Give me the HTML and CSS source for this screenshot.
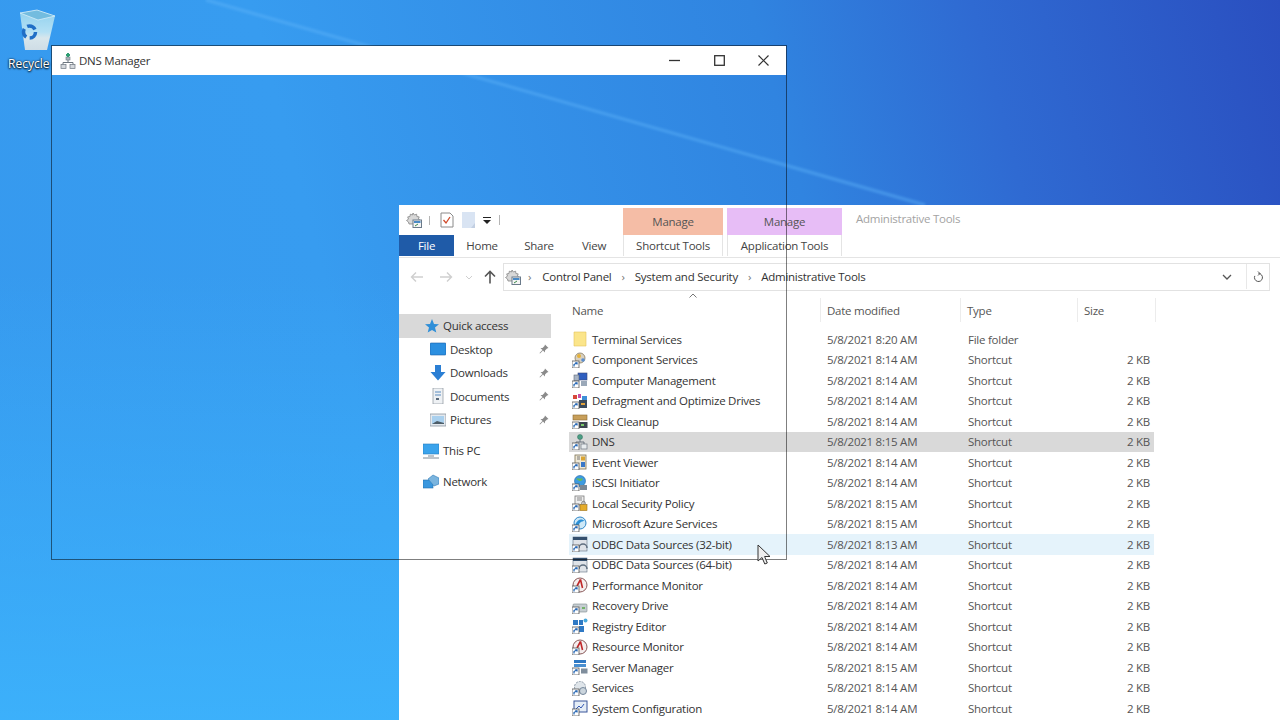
FILE: index.html
```html
<!DOCTYPE html>
<html lang="en">
<head>
<meta charset="utf-8">
<title>DNS Manager</title>
<link rel="stylesheet" href="styles.css">
</head>
<body>
<svg width="0" height="0" class="defs">
  <defs>
    <linearGradient id="binBody" x1="0" y1="0" x2="0" y2="1"><stop offset="0" stop-color="#8fd0ee"/><stop offset=".55" stop-color="#b4e0f4"/><stop offset=".7" stop-color="#d8e6ec"/><stop offset="1" stop-color="#cfdde6"/></linearGradient>
    <symbol id="arrow" viewBox="0 0 16 16"><rect x="0" y="9" width="7" height="7" fill="#fff" stroke="#555" stroke-width=".8"/><path d="M2 14.500V12.500L4.500 11M3.200 10.800H5V12.400" fill="none" stroke="#1b5fb0" stroke-width="1.200"/></symbol>
    <symbol id="tools" viewBox="0 0 16 16"><path d="M7 1l1.400 2 2.200-.8.300 2.300 2.300.4-.8 2.200 2 1.300-2 1.400.8 2.200H3l-.5-2-2-1.500 2-1.400-.8-2.200 2.300-.4.300-2.300 2.200.8z" fill="#d8d8d8" stroke="#858585" stroke-width=".8"/><rect x="7" y="8" width="8.500" height="7.500" fill="#f4f4f4" stroke="#6a7a8a"/><rect x="8" y="9" width="6.500" height="2" fill="#4a8ac6"/><path d="M9 14l3-2" stroke="#3b8a4a"/></symbol>
    <symbol id="dnsicon" viewBox="0 0 16 16"><rect x="6" y="4" width="4" height="3" fill="#aeb6bd" stroke="#6d7780" stroke-width=".6"/><path d="M8 7v2M3 12V9.500h10V12" fill="none" stroke="#6d7780"/><rect x="1" y="11.500" width="5" height="4" fill="#d4d8dc" stroke="#6d7780" stroke-width=".7"/><rect x="10" y="11.500" width="5" height="4" fill="#d4d8dc" stroke="#6d7780" stroke-width=".7"/><path d="M8 0v4M6 2h4" stroke="#2f9e73" stroke-width="2"/></symbol>
    <symbol id="i-component" viewBox="0 0 16 16"><circle cx="8" cy="6" r="5" fill="#d8d0c0" stroke="#8a7c60" stroke-width=".8"/><circle cx="7" cy="4" r="2" fill="#e6b23a"/><circle cx="11" cy="8" r="1.800" fill="#5a8ed0"/><use href="#arrow"/></symbol>
    <symbol id="i-computer" viewBox="0 0 16 16"><rect x="6" y="1" width="9" height="7" fill="#2f5fc0" stroke="#3a4a78" stroke-width=".6"/><rect x="2" y="3" width="5" height="6" fill="#a8b4c4" stroke="#5c6878" stroke-width=".6"/><rect x="9" y="9" width="6" height="5" fill="#9aa8b8"/><use href="#arrow"/></symbol>
    <symbol id="i-defrag" viewBox="0 0 16 16"><rect x="1" y="2" width="4" height="4" fill="#d8483a"/><rect x="6" y="1" width="3" height="4" fill="#c84fa8"/><rect x="10" y="3" width="5" height="4" fill="#3e8ed8"/><rect x="7" y="7" width="8" height="8" fill="#3b4a5c"/><rect x="9" y="10" width="4" height="2" fill="#e2a23a"/><use href="#arrow"/></symbol>
    <symbol id="i-disk" viewBox="0 0 16 16"><rect x="1" y="2" width="14" height="5" fill="#c89f5a" stroke="#8a6c34" stroke-width=".6"/><rect x="7" y="9" width="8.500" height="6" fill="#3d4650"/><rect x="9" y="11" width="3" height="2" fill="#7bc96a"/><use href="#arrow"/></symbol>
    <symbol id="i-dns" viewBox="0 0 16 16"><circle cx="8" cy="3" r="2.500" fill="#4c9e84" stroke="#2e6c5a" stroke-width=".5"/><path d="M8 5v3M4 10V8h8v3" fill="none" stroke="#6a7480"/><rect x="9" y="10" width="6" height="5" fill="#e8ecef" stroke="#6d7780" stroke-width=".7"/><use href="#arrow"/></symbol>
    <symbol id="i-event" viewBox="0 0 16 16"><rect x="3" y="1" width="11" height="14" fill="#f0e9d6" stroke="#7b6f52" stroke-width=".8"/><rect x="9" y="2.500" width="4" height="4" fill="#d9a432"/><rect x="9" y="8" width="4" height="5" fill="#3a78c8"/><path d="M5 3h3M5 5h3" stroke="#777"/><use href="#arrow"/></symbol>
    <symbol id="i-iscsi" viewBox="0 0 16 16"><circle cx="8" cy="6" r="5.500" fill="#3d9be0" stroke="#2166a8" stroke-width=".6"/><path d="M4 4c2-2 4 1 6-1 2 3-3 4-4 2z" fill="#67b958"/><rect x="8" y="10" width="7" height="5" fill="#7a8794"/><use href="#arrow"/></symbol>
    <symbol id="i-policy" viewBox="0 0 16 16"><rect x="3" y="1" width="9" height="9" fill="#eee" stroke="#7a7a7a" stroke-width=".8"/><path d="M5 3h5M5 5h5" stroke="#888"/><rect x="8" y="9.500" width="7" height="6" fill="#e5ac2b" stroke="#9b7014" stroke-width=".6"/><path d="M9.800 9.500V8a1.700 1.700 0 013.400 0v1.500" fill="none" stroke="#7e7e7e"/><use href="#arrow"/></symbol>
    <symbol id="i-azure" viewBox="0 0 16 16"><circle cx="8" cy="7" r="6" fill="#cde8f7" stroke="#2f86c8"/><path d="M3 9c3-7 7-6 10-4-4 0-6 2-7 6z" fill="#2a8fd6"/><use href="#arrow"/></symbol>
    <symbol id="i-odbc" viewBox="0 0 16 16"><rect x="1" y="1" width="14" height="14" fill="#dfe3e8" stroke="#5f6f80" stroke-width=".6"/><rect x="1" y="1" width="14" height="3" fill="#35506e"/><path d="M7 12a4 4 0 018 0" fill="none" stroke="#5f6f80" stroke-width="1.500"/><use href="#arrow"/></symbol>
    <symbol id="i-monitor" viewBox="0 0 16 16"><circle cx="8" cy="8" r="7" fill="#f4eeee" stroke="#8a5a5a"/><path d="M8.500 2.500L10.500 11M8.500 2.500L5 9" stroke="#c0282a" stroke-width="1.600" fill="none"/><use href="#arrow"/></symbol>
    <symbol id="i-recovery" viewBox="0 0 16 16"><rect x="1" y="6" width="14" height="8" rx="1" fill="#c6ced2" stroke="#7b868c" stroke-width=".6"/><rect x="10" y="9" width="3" height="2" fill="#74b26a"/><use href="#arrow"/></symbol>
    <symbol id="i-registry" viewBox="0 0 16 16"><rect x="1" y="2" width="5" height="5" fill="#2f79c4"/><rect x="7" y="2" width="4" height="5" fill="#2f79c4"/><circle cx="13.500" cy="2.500" r="2" fill="#48a9dc"/><rect x="7" y="8" width="5" height="6" fill="#2f79c4"/><use href="#arrow"/></symbol>
    <symbol id="i-server" viewBox="0 0 16 16"><rect x="2" y="1" width="12" height="3" fill="#2f79c4"/><rect x="2" y="5" width="12" height="3" fill="#4a8fd0"/><rect x="9" y="9.500" width="6.500" height="5" fill="#7f8e9c"/><use href="#arrow"/></symbol>
    <symbol id="i-services" viewBox="0 0 16 16"><circle cx="8" cy="7" r="5.500" fill="#dfe5ea" stroke="#8a98a6" stroke-dasharray="2 1"/><circle cx="11" cy="11" r="3.500" fill="#cbd5dd" stroke="#74869a"/><use href="#arrow"/></symbol>
    <symbol id="i-sysconfig" viewBox="0 0 16 16"><rect x="2" y="1" width="13" height="11" fill="#e5edf6" stroke="#39549a"/><path d="M4 9l3-3 2 2 3-4" fill="none" stroke="#3458b4"/><use href="#arrow"/></symbol>
    <symbol id="pin" viewBox="0 0 10 10"><path d="M6 .5l3.500 3.500-1.500.5-2 2v2L4 6.500 1 9.500l-.5-.5L3.500 6 1.500 4h2l2-2z" fill="#8a8a8a"/></symbol>
  </defs>
</svg>

<main class="desktop">
  <svg class="wallpaper" viewBox="0 0 1280 720" preserveAspectRatio="none" aria-hidden="true">
    <path class="streak" d="M206 0L925 205" fill="none" stroke="#62b6fa" stroke-width="3.500" opacity=".4"/>
  </svg>

  <div class="recycle">
    <svg class="recycle-bin" viewBox="0 0 38 42" width="38" height="42" aria-hidden="true">
      <path d="M2 4L19 1L37 7L29 41H7Z" fill="url(#binBody)"/>
      <path d="M2 4L19 1L37 7L20 11Z" fill="#73bcdf" stroke="#d6eef9" stroke-width=".8"/>
      <circle cx="11.500" cy="23" r="6" fill="none" stroke="#1f6ec6" stroke-width="3.500" stroke-dasharray="9 3.570"/>
    </svg>
    <span class="recycle-label">Recycle</span>
  </div>

  <section class="explorer">
    <div class="ribbon-top">
      <div class="qat">
        <svg class="ic16"><use href="#tools"/></svg>
        <span class="qat-sep"></span>
        <svg class="qat-check" viewBox="0 0 14 16" width="14" height="16"><path d="M1 1h9l3 3v11H1z" fill="#fff" stroke="#8a8a8a"/><path d="M3.500 8l2.500 3 4-6" fill="none" stroke="#d04a2a" stroke-width="1.300"/></svg>
        <svg class="qat-page" viewBox="0 0 13 16" width="13" height="16"><rect width="13" height="16" fill="#d9e4f3"/><path d="M9 16h4v-5z" fill="#c2cfe2"/></svg>
        <svg class="qat-drop" viewBox="0 0 8 7" width="8" height="7"><path d="M0 0h8v1H0zM0 3h8L4 7z" fill="#222"/></svg>
        <span class="qat-sep tall"></span>
      </div>
      <div class="ctx-head salmon">Manage</div>
      <div class="ctx-head violet">Manage</div>
      <div class="win-title">Administrative Tools</div>
    </div>

    <nav class="tabs">
      <span class="tab file">File</span>
      <span class="tab home">Home</span>
      <span class="tab share">Share</span>
      <span class="tab view">View</span>
      <span class="tab ctx shortcut">Shortcut Tools</span>
      <span class="tab ctx app">Application Tools</span>
    </nav>

    <div class="navbar">
      <div class="nav-buttons">
        <svg viewBox="0 0 14 12" width="14" height="12" class="nav-off"><path d="M13 6H2M6 1.500L1.500 6 6 10.500" fill="none" stroke="currentColor" stroke-width="1.400"/></svg>
        <svg viewBox="0 0 14 12" width="14" height="12" class="nav-off"><path d="M1 6h11M8 1.500L12.500 6 8 10.500" fill="none" stroke="currentColor" stroke-width="1.400"/></svg>
        <svg viewBox="0 0 8 5" width="8" height="5" class="nav-off"><path d="M1 1l3 3 3-3" fill="none" stroke="currentColor"/></svg>
        <svg viewBox="0 0 12 14" width="12" height="14" class="nav-up"><path d="M6 13.500V2M1 6.500L6 1.500l5 5" fill="none" stroke="currentColor" stroke-width="1.600"/></svg>
      </div>
      <div class="address">
        <svg class="ic16"><use href="#tools"/></svg>
        <span class="crumb-sep first">›</span>
        <span class="crumb">Control Panel</span>
        <span class="crumb-sep">›</span>
        <span class="crumb">System and Security</span>
        <span class="crumb-sep">›</span>
        <span class="crumb">Administrative Tools</span>
        <svg class="addr-chevron" viewBox="0 0 10 6" width="10" height="6"><path d="M1 1l4 4 4-4" fill="none" stroke="#555" stroke-width="1.300"/></svg>
        <span class="addr-refresh">
          <svg viewBox="0 0 12 12" width="12" height="12"><path d="M6.500 2.500a4 4 0 11-3.700 2.400M6 .5l2 2-2 2" fill="none" stroke="#555"/></svg>
        </span>
      </div>
    </div>

    <div class="content">
      <aside class="tree">
        <div class="tree-row top selected">
          <svg class="ic16" viewBox="0 0 16 16"><path d="M9 1l2 5 5 .3-4 3.200 1.300 5L9 12l-4.300 2.500L6 9.500 2 6.300 7 6z" fill="#2f8fd8"/></svg>
          <span>Quick access</span>
        </div>
        <div class="tree-row sub">
          <svg class="ic16" viewBox="0 0 16 16"><rect y="2" width="16" height="12" rx="1" fill="#2b8fe0" stroke="#1a5fa8" stroke-width=".6"/></svg>
          <span>Desktop</span>
          <svg class="pin"><use href="#pin"/></svg>
        </div>
        <div class="tree-row sub">
          <svg class="ic16" viewBox="0 0 16 16"><path d="M5 0h6v7h4.500L8 15.500.5 7H5z" fill="#2b7fd4"/></svg>
          <span>Downloads</span>
          <svg class="pin"><use href="#pin"/></svg>
        </div>
        <div class="tree-row sub">
          <svg class="ic16" viewBox="0 0 16 16"><rect x="3" y="0" width="10" height="16" fill="#eef1f4" stroke="#8a939c" stroke-width=".7"/><path d="M5 4h6M5 7h6" stroke="#5a8cc0"/><rect x="6" y="10" width="3" height="2" fill="#5a6a7c"/></svg>
          <span>Documents</span>
          <svg class="pin"><use href="#pin"/></svg>
        </div>
        <div class="tree-row sub">
          <svg class="ic16" viewBox="0 0 16 16"><rect y="2" width="16" height="12" fill="#e4e9ee" stroke="#7d8892" stroke-width=".7"/><rect x="2" y="4" width="12" height="8" fill="#a9d0ee"/><path d="M2 12l5-3 7 2v1z" fill="#4d5d68"/></svg>
          <span>Pictures</span>
          <svg class="pin"><use href="#pin"/></svg>
        </div>
        <div class="tree-row top gap">
          <svg class="ic16" viewBox="0 0 16 16"><rect y="1" width="16" height="10" fill="#3aa3ec" stroke="#2a7fbe" stroke-width=".6"/><path d="M5 13h6M0 15h16" stroke="#7c8a96"/></svg>
          <span>This PC</span>
        </div>
        <div class="tree-row top gap">
          <svg class="ic16" viewBox="0 0 16 16"><rect x="0" y="6" width="10" height="8" fill="#3a97de" stroke="#2370ad" stroke-width=".6"/><path d="M5 5l5-4 6 3v6l-5 2z" fill="#7ab4de" stroke="#2d7ab8" stroke-width=".6"/></svg>
          <span>Network</span>
        </div>
      </aside>

      <div class="files">
        <div class="sort-caret"><svg viewBox="0 0 8 5" width="8" height="5"><path d="M.5 4.500L4 1l3.500 3.500" fill="none" stroke="#777"/></svg></div>
        <div class="columns">
          <span class="col name">Name</span>
          <span class="col">Date modified</span>
          <span class="col">Type</span>
          <span class="col">Size</span>
        </div>
        <ul class="rows">
          <li class="row"><svg class="ic16" viewBox="0 0 16 16"><path d="M2 1h12v14H2z" fill="#fbe58a" stroke="#e4c45c" stroke-width=".6"/></svg><span class="fname">Terminal Services</span><span>5/8/2021 8:20 AM</span><span>File folder</span><span class="size"></span></li>
          <li class="row"><svg class="ic16"><use href="#i-component"/></svg><span class="fname">Component Services</span><span>5/8/2021 8:14 AM</span><span>Shortcut</span><span class="size">2 KB</span></li>
          <li class="row"><svg class="ic16"><use href="#i-computer"/></svg><span class="fname">Computer Management</span><span>5/8/2021 8:14 AM</span><span>Shortcut</span><span class="size">2 KB</span></li>
          <li class="row"><svg class="ic16"><use href="#i-defrag"/></svg><span class="fname">Defragment and Optimize Drives</span><span>5/8/2021 8:14 AM</span><span>Shortcut</span><span class="size">2 KB</span></li>
          <li class="row"><svg class="ic16"><use href="#i-disk"/></svg><span class="fname">Disk Cleanup</span><span>5/8/2021 8:14 AM</span><span>Shortcut</span><span class="size">2 KB</span></li>
          <li class="row selected"><svg class="ic16"><use href="#i-dns"/></svg><span class="fname">DNS</span><span>5/8/2021 8:15 AM</span><span>Shortcut</span><span class="size">2 KB</span></li>
          <li class="row"><svg class="ic16"><use href="#i-event"/></svg><span class="fname">Event Viewer</span><span>5/8/2021 8:14 AM</span><span>Shortcut</span><span class="size">2 KB</span></li>
          <li class="row"><svg class="ic16"><use href="#i-iscsi"/></svg><span class="fname">iSCSI Initiator</span><span>5/8/2021 8:14 AM</span><span>Shortcut</span><span class="size">2 KB</span></li>
          <li class="row"><svg class="ic16"><use href="#i-policy"/></svg><span class="fname">Local Security Policy</span><span>5/8/2021 8:15 AM</span><span>Shortcut</span><span class="size">2 KB</span></li>
          <li class="row"><svg class="ic16"><use href="#i-azure"/></svg><span class="fname">Microsoft Azure Services</span><span>5/8/2021 8:15 AM</span><span>Shortcut</span><span class="size">2 KB</span></li>
          <li class="row hover"><svg class="ic16"><use href="#i-odbc"/></svg><span class="fname">ODBC Data Sources (32-bit)</span><span>5/8/2021 8:13 AM</span><span>Shortcut</span><span class="size">2 KB</span></li>
          <li class="row"><svg class="ic16"><use href="#i-odbc"/></svg><span class="fname">ODBC Data Sources (64-bit)</span><span>5/8/2021 8:14 AM</span><span>Shortcut</span><span class="size">2 KB</span></li>
          <li class="row"><svg class="ic16"><use href="#i-monitor"/></svg><span class="fname">Performance Monitor</span><span>5/8/2021 8:14 AM</span><span>Shortcut</span><span class="size">2 KB</span></li>
          <li class="row"><svg class="ic16"><use href="#i-recovery"/></svg><span class="fname">Recovery Drive</span><span>5/8/2021 8:14 AM</span><span>Shortcut</span><span class="size">2 KB</span></li>
          <li class="row"><svg class="ic16"><use href="#i-registry"/></svg><span class="fname">Registry Editor</span><span>5/8/2021 8:14 AM</span><span>Shortcut</span><span class="size">2 KB</span></li>
          <li class="row"><svg class="ic16"><use href="#i-monitor"/></svg><span class="fname">Resource Monitor</span><span>5/8/2021 8:14 AM</span><span>Shortcut</span><span class="size">2 KB</span></li>
          <li class="row"><svg class="ic16"><use href="#i-server"/></svg><span class="fname">Server Manager</span><span>5/8/2021 8:15 AM</span><span>Shortcut</span><span class="size">2 KB</span></li>
          <li class="row"><svg class="ic16"><use href="#i-services"/></svg><span class="fname">Services</span><span>5/8/2021 8:14 AM</span><span>Shortcut</span><span class="size">2 KB</span></li>
          <li class="row"><svg class="ic16"><use href="#i-sysconfig"/></svg><span class="fname">System Configuration</span><span>5/8/2021 8:14 AM</span><span>Shortcut</span><span class="size">2 KB</span></li>
        </ul>
      </div>
    </div>
  </section>

  <section class="ghost">
    <header class="ghost-bar">
      <svg class="ic16"><use href="#dnsicon"/></svg>
      <span class="ghost-title">DNS Manager</span>
      <div class="win-controls">
        <svg viewBox="0 0 11 11" width="11" height="11"><path d="M0 5.500h11" stroke="#333" stroke-width="1.300"/></svg>
        <svg viewBox="0 0 11 11" width="11" height="11"><rect x=".7" y=".7" width="9.600" height="9.600" fill="none" stroke="#333" stroke-width="1.300"/></svg>
        <svg viewBox="0 0 11 11" width="11" height="11"><path d="M.5.500l10 10M10.500.500l-10 10" stroke="#333" stroke-width="1.200"/></svg>
      </div>
    </header>
  </section>

  <svg class="cursor" viewBox="0 0 14 22" width="14" height="22" aria-hidden="true">
    <path d="M1 1v16l4-3.500 2.800 6.500 2.500-1-2.700-6.500H13z" fill="#eeeeee" stroke="#333" stroke-width="1"/>
  </svg>
</main>
</body>
</html>
```
FILE: styles.css
```css
* { box-sizing: border-box; }
html, body { margin: 0; height: 100%; }
body { overflow: hidden; font-family: "Open Sans", "Noto Sans", sans-serif; font-size: 11.5px; letter-spacing: -.25px; color: #333; }
.defs { position: absolute; }
ul { list-style: none; margin: 0; padding: 0; }

.desktop {
  position: relative;
  width: 1280px;
  height: 720px;
  overflow: hidden;
  background:
    linear-gradient(to top, rgba(62, 184, 255, .75) 0%, rgba(62, 184, 255, 0) 62%),
    linear-gradient(75deg, #3699ee 0%, #379cf0 30%, #3084e0 64%, #2f6ad2 79%, #2a4fc0 100%);
}
.wallpaper { position: absolute; inset: 0; width: 100%; height: 100%; }
.streak { filter: blur(1px); }

.recycle {
  position: absolute; left: 3px; top: 8px; width: 50px;
  display: flex; flex-direction: column; align-items: flex-start; gap: 6px;
}
.recycle-bin { margin-left: 15px; margin-top: 1px; flex: none; }
.recycle-label { color: #fff; font-size: 12px; letter-spacing: 0; line-height: 14px; text-shadow: 0 0 2px #000, 0 1px 2px #000; margin-left: 5px; }

.ic16 { width: 16px; height: 16px; flex: none; display: block; }

/* Explorer */
.explorer {
  position: absolute; left: 399px; top: 205px; width: 881px; height: 515px;
  background: #fff; display: flex; flex-direction: column;
}
.ribbon-top { height: 30px; display: flex; align-items: flex-start; }
.qat { width: 224px; height: 30px; display: flex; align-items: center; padding-left: 7px; }
.qat-sep { width: 1px; height: 9px; background: #b5b5b5; margin: 0 10px 0 7px; }
.qat-sep.tall { height: 10px; margin: -1px 0 0 8px; }
.qat-check { margin-right: 8px; }
.qat-page { margin-right: 8px; }
.ctx-head { height: 27px; margin-top: 3px; text-align: center; line-height: 27px; color: #555; }
.ctx-head.salmon { width: 100px; background: #f5bda6; }
.ctx-head.violet { width: 115px; margin-left: 4px; background: #e7bdf6; }
.win-title { margin-left: 14px; line-height: 28px; color: #a3a3a3; }

.tabs { height: 23px; display: flex; border-bottom: 1px solid #e4e4e4; padding-bottom: 1px; align-items: stretch; }
.tab { display: flex; align-items: center; justify-content: center; color: #444; }
.tab.file { width: 55px; background: #1f5ba8; color: #fff; }
.tab.home { width: 56px; }
.tab.share { width: 58px; }
.tab.view { width: 52px; }
.tab.ctx { border-right: 1px solid #e4e4e4; border-left: 1px solid #e4e4e4; }
.tab.shortcut { width: 100px; margin-left: 3px; }
.tab.app { width: 115px; margin-left: 4px; }

.navbar { height: 33px; display: flex; align-items: center; padding: 5px 10px 0 11px; }
.nav-buttons { width: 93px; display: flex; align-items: center; }
.nav-off { color: #cfcfcf; flex: none; }
.nav-off:nth-child(1) { margin-right: 15px; }
.nav-off:nth-child(2) { margin-right: 12px; }
.nav-up { color: #555; margin-left: 11px; flex: none; }
.address {
  flex: 1; height: 28px; display: flex; align-items: center; border: 1px solid #e2e2e2;
  padding: 0 0 1px 1px; color: #333;
}
.crumb-sep { color: #777; margin: 0 10px; }
.crumb-sep.first { margin: 0 11px 0 7px; }
.addr-chevron { margin-left: auto; margin-right: 14px; }
.addr-refresh { width: 23px; height: 100%; border-left: 1px solid #e8e8e8; display: flex; align-items: center; justify-content: center; }

/* Content */
.content { flex: 1; display: flex; min-height: 0; }
.tree { width: 153px; padding-top: 23px; }
.tree-row { display: flex; align-items: center; height: 23.500px; color: #333; gap: 4px; }
.tree-row.top { padding-left: 24px; }
.tree-row.sub { padding-left: 31px; }
.tree-row.selected { background: #d9d9d9; margin-right: 1px; }
.tree-row.gap { margin-top: 7.500px; }
.tree-row .pin { width: 10px; height: 10px; margin-left: auto; margin-right: 3px; }

.files { flex: 1; position: relative; padding-left: 18px; }
.sort-caret { position: absolute; left: 137px; top: 2px; line-height: 0; }
.columns { height: 38px; display: grid; grid-template-columns: 251px 140px 117px 78px; align-items: center; color: #555; }
.col { height: 24px; display: flex; align-items: center; padding-left: 6px; border-right: 1px solid #ececec; }
.col.name { padding-left: 2px; }
.rows { width: 585px; margin-left: -1px; }
.row {
  height: 20.500px; display: grid; grid-template-columns: 16px 239px 141px 118px 1fr;
  align-items: center; padding: 0 4px 0 3px; color: #555;
}
.row .fname { color: #333; padding-left: 4px; white-space: nowrap; }
.row .size { text-align: right; }
.row.selected { background: #d9d9d9; }
.row.hover { background: #e5f3fb; }

/* Ghost window outline */
.ghost {
  position: absolute; left: 51px; top: 45px; width: 736px; height: 515px;
  border: 1px solid rgba(0, 0, 0, .5);
}
.ghost-bar { height: 29px; background: #fff; display: flex; align-items: center; padding-left: 8px; gap: 3px; }
.ghost-title { color: #333; }
.win-controls { margin-left: auto; display: flex; align-items: center; gap: 33.500px; padding-right: 17px; }

.cursor { position: absolute; left: 757px; top: 544px; }
```
